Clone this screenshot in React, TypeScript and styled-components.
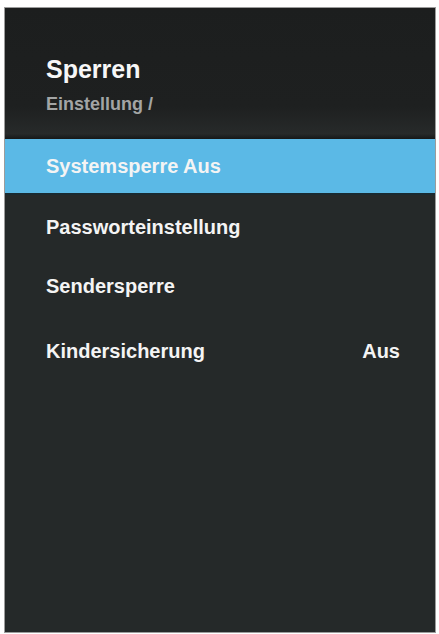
import React from 'react';
import styled, { createGlobalStyle } from 'styled-components';

const GlobalStyle = createGlobalStyle`
  html, body {
    margin: 0;
    padding: 0;
    background: #ffffff;
  }
  body {
    font-family: "Liberation Sans", Arial, sans-serif;
  }
`;

const Page = styled.div`
  width: 439px;
  height: 634px;
  padding: 7px 3px 1px 4px;
  box-sizing: border-box;
  background: #ffffff;
`;

const Panel = styled.div`
  width: 432px;
  height: 626px;
  box-sizing: border-box;
  border: 1px solid #9c9c9c;
  background: #252929;
  display: flex;
  flex-direction: column;
`;

const Header = styled.div`
  padding: 49px 41px 26px;
  background: linear-gradient(to bottom, #1c1e1e 0%, #1e2020 75%, #272a2a 96%, #161818 100%);
  display: flex;
  flex-direction: column;
  gap: 13px;
`;

const Title = styled.div`
  font-size: 25px;
  line-height: 25px;
  font-weight: 700;
  color: #f7f7f7;
`;

const Breadcrumb = styled.div`
  font-size: 18px;
  line-height: 18px;
  font-weight: 700;
  color: #a3a5a5;
`;

const Menu = styled.div`
  display: flex;
  flex-direction: column;
  gap: 5px;
`;

const Row = styled.div<{ $active?: boolean; $extraTop?: number }>`
  height: 54px;
  margin-top: ${(p) => p.$extraTop ?? 0}px;
  padding: 0 35px 0 41px;
  display: flex;
  align-items: center;
  justify-content: space-between;
  font-size: 20px;
  line-height: 20px;
  font-weight: 700;
  color: #f4f4f4;
  background: ${(p) => (p.$active ? '#5bb9e6' : 'transparent')};
  border-bottom: ${(p) => (p.$active ? '2px solid #1a2a30' : 'none')};
`;

const Value = styled.span`
  color: #f4f4f4;
`;

const items = [
  { label: 'Systemsperre Aus', active: true },
  { label: 'Passworteinstellung' },
  { label: 'Sendersperre' },
  { label: 'Kindersicherung', value: 'Aus', extraTop: 6 },
];

const App: React.FC = () => {
  return (
    <>
      <GlobalStyle />
      <Page>
        <Panel>
          <Header>
            <Title>Sperren</Title>
            <Breadcrumb>Einstellung /</Breadcrumb>
          </Header>
          <Menu>
            {items.map((item) => (
              <Row key={item.label} $active={item.active} $extraTop={item.extraTop}>
                <span>{item.label}</span>
                {item.value && <Value>{item.value}</Value>}
              </Row>
            ))}
          </Menu>
        </Panel>
      </Page>
    </>
  );
};

export default App;
